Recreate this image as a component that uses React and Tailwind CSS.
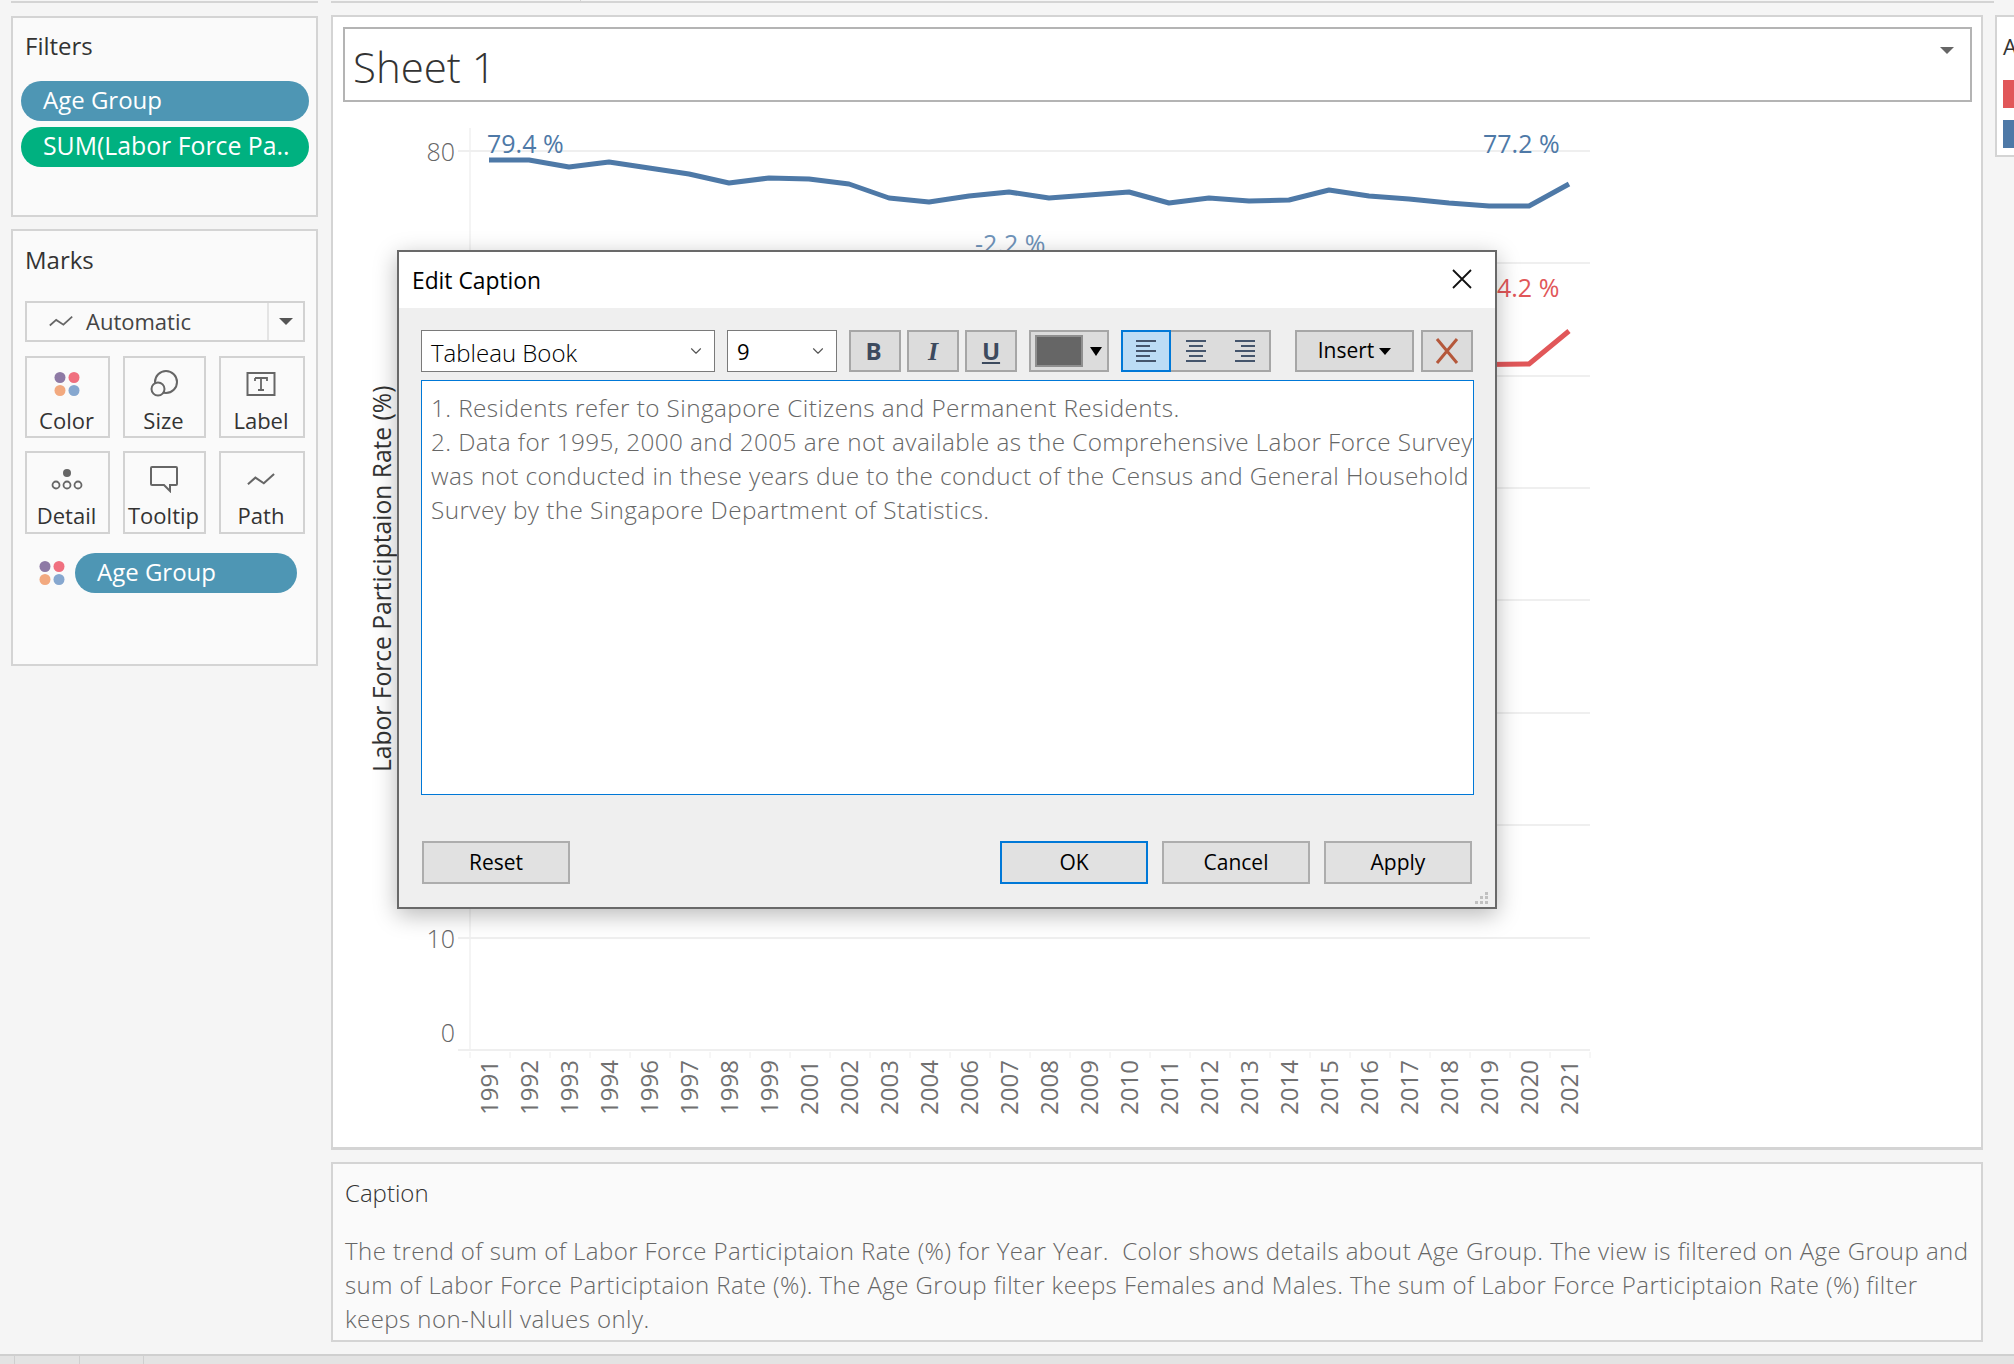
import React from 'react';
import { ChevronDown } from 'lucide-react';

const years = [1991, 1992, 1993, 1994, 1996, 1997, 1998, 1999, 2001, 2002, 2003, 2004, 2006, 2007, 2008, 2009, 2010, 2011, 2012, 2013, 2014, 2015, 2016, 2017, 2018, 2019, 2020, 2021];
const blueY = [160, 160, 167, 162, 168, 174, 183, 178, 179, 184, 198, 202, 196, 192, 198, 195, 192, 203, 198, 201, 200, 190, 196, 199, 203, 206, 206, 184];
const gridLines = [151, 263, 376, 488, 600, 713, 825, 938, 1050];

const book = { fontFamily: '"Open Sans", sans-serif' };

function ColorDots({ className }) {
  return (
    <svg viewBox="0 0 26 26" className={className}>
      <circle cx="6" cy="6.500" r="5.500" fill="#8e7aa5" />
      <circle cx="20" cy="6.500" r="5.500" fill="#f0707f" />
      <circle cx="6" cy="19.500" r="5.500" fill="#f2a97f" />
      <circle cx="20" cy="19.500" r="5.500" fill="#86a7cf" />
    </svg>
  );
}

function SizeIcon() {
  return (
    <svg viewBox="0 0 30 28" className="w-[30px] h-[28px]" fill="none" stroke="#666" strokeWidth="2">
      <circle cx="17" cy="12" r="11" />
      <circle cx="9" cy="19" r="6.500" fill="#fafafa" />
    </svg>
  );
}

function LabelIcon() {
  return (
    <svg viewBox="0 0 30 28" className="w-[30px] h-[28px]" fill="none">
      <rect x="1.500" y="3" width="27" height="22" stroke="#666" strokeWidth="2" />
      <path d="M9 8h12v3M9 8v3M15 8v12M12 20h6" stroke="#666" strokeWidth="1.800" />
    </svg>
  );
}

function DetailIcon() {
  return (
    <svg viewBox="0 0 32 28" className="w-[32px] h-[28px]" fill="none" stroke="#666" strokeWidth="1.800">
      <circle cx="16" cy="8" r="4" fill="#666" stroke="none" />
      <circle cx="5" cy="20" r="3.500" />
      <circle cx="16" cy="20" r="3.500" />
      <circle cx="27" cy="20" r="3.500" />
    </svg>
  );
}

function TooltipIcon() {
  return (
    <svg viewBox="0 0 30 28" className="w-[30px] h-[28px]" fill="none" stroke="#666" strokeWidth="2">
      <path d="M3 2h24a1 1 0 0 1 1 1v16a1 1 0 0 1-1 1h-6v6l-6-6H3a1 1 0 0 1-1-1V3a1 1 0 0 1 1-1z" />
    </svg>
  );
}

function PathIcon({ className }) {
  return (
    <svg viewBox="0 0 30 16" className={className} fill="none" stroke="#666" strokeWidth="2.200">
      <path d="M1 13 L9 6 L18 12 L29 2" />
    </svg>
  );
}

function MarkButton({ icon, label }) {
  return (
    <div className="h-full border-2 border-[#d2d2d2] bg-[#fafafa] flex flex-col items-center pt-[10px] pr-[2px]">
      <div className="h-[32px] flex items-center justify-center">{icon}</div>
      <span className="text-[22px] leading-[30px] text-[#333] mt-[5px] whitespace-nowrap">{label}</span>
    </div>
  );
}

function Pill({ children, className }) {
  return (
    <div className={`h-[40px] rounded-full pl-[22px] pb-[2px] flex items-center text-white whitespace-nowrap ${className}`}>
      {children}
    </div>
  );
}

function ToolButton({ children, className = '' }) {
  return (
    <div className={`h-[42px] border-2 border-[#a6a6a6] bg-[#dcdcdc] flex items-center justify-center ${className}`}>
      {children}
    </div>
  );
}

function AlignLines({ mode }) {
  const short = mode === 'left' ? 'M2 9h14M2 19h14' : mode === 'center' ? 'M5 9h14M5 19h14' : 'M8 9h14M8 19h14';
  return (
    <svg viewBox="0 0 24 28" className="w-[24px] h-[28px]" fill="none" stroke="#45556c" strokeWidth="2.200">
      <path d={`M2 4h20M2 14h20M2 24h20 ${short}`} />
    </svg>
  );
}

function DialogButton({ children, focused }) {
  return (
    <div className={`w-[148px] h-[43px] flex items-center justify-center bg-[#e1e1e1] text-[21px] text-black border-2 ${focused ? 'border-[#0078d7]' : 'border-[#adadad]'}`}>
      {children}
    </div>
  );
}

function Chart() {
  const blue = years.map((_, i) => `${489 + i * 40},${blueY[i]}`).join(' ');
  return (
    <svg viewBox="333 104 1646 1042" className="mt-[2px] w-[1646px] h-[1042px] block" style={book}>
      <line x1="470" y1="128" x2="470" y2="1050" stroke="#f0f0f0" strokeWidth="1.500" />
      {gridLines.map((y) => (
        <line key={y} x1="458" y1={y} x2="1590" y2={y} stroke="#efefef" strokeWidth="2" />
      ))}
      {years.map((year, i) => (
        <g key={year}>
          <line x1={470 + i * 40} y1="1052" x2={470 + i * 40} y2="1058" stroke="#eee" />
          <text transform={`translate(${498 + i * 40} 1115) rotate(-90)`} fontSize="24" fill="#707070">{year}</text>
        </g>
      ))}
      <line x1="1590" y1="1052" x2="1590" y2="1058" stroke="#eee" />
      <text x="455" y="161" textAnchor="end" fontSize="25" fontWeight="300" fill="#666">80</text>
      <text x="455" y="948" textAnchor="end" fontSize="25" fontWeight="300" fill="#666">10</text>
      <text x="455" y="1042" textAnchor="end" fontSize="25" fontWeight="300" fill="#666">0</text>
      <text transform="translate(391 772) rotate(-90)" fontSize="24.600" fill="#333">Labor Force Participtaion Rate (%)</text>
      <polyline points={blue} fill="none" stroke="#4e79a7" strokeWidth="5" strokeLinejoin="round" />
      <polyline points="1449,365 1529,364 1569,331" fill="none" stroke="#e15759" strokeWidth="5" strokeLinejoin="round" />
      <text x="487" y="153" fontSize="25" fill="#4e79a7">79.4 %</text>
      <text x="1483" y="153" fontSize="25" fill="#4e79a7">77.2 %</text>
      <text x="975" y="253" fontSize="25" fill="#6f93b9">-2.2 %</text>
      <text x="1497" y="297" fontSize="25" fill="#e15759">4.2 %</text>
    </svg>
  );
}

function EditCaption() {
  return (
    <div className="absolute left-[397px] top-[250px] w-[1100px] h-[659px] border-2 border-[#696969] bg-[#efefef] shadow-[0_6px_22px_rgba(0,0,0,0.28)] flex flex-col">
      <div className="h-[56px] bg-white flex items-center justify-between pl-[13px] pr-[23px]">
        <span className="text-[22.800px] text-black mt-[2px]">Edit Caption</span>
        <svg viewBox="0 0 20 20" className="w-[20px] h-[20px] -mt-[2px]" stroke="#111" strokeWidth="1.800">
          <path d="M1 1L19 19M19 1L1 19" />
        </svg>
      </div>
      <div className="relative flex-1 pl-[22px] pr-[21px] pt-[22px]">
        <div className="flex items-center text-black">
          <div className="w-[294px] h-[42px] border border-[#7a7a7a] bg-white flex items-center justify-between pl-[9px] pr-[9px]">
            <span className="text-[24px] mt-[4px] font-light" style={book}>Tableau Book</span>
            <ChevronDown className="w-[18px] h-[18px] text-[#555]" strokeWidth={1.500} />
          </div>
          <div className="ml-[12px] w-[110px] h-[42px] border border-[#7a7a7a] bg-white flex items-center justify-between pl-[9px] pr-[9px]">
            <span className="text-[22px]" style={book}>9</span>
            <ChevronDown className="w-[18px] h-[18px] text-[#555]" strokeWidth={1.500} />
          </div>
          <ToolButton className="ml-[12px] w-[52px]">
            <span className="text-[24px] font-bold text-[#3c4a5e] -ml-[3px]">B</span>
          </ToolButton>
          <ToolButton className="ml-[6px] w-[52px]">
            <span className="text-[26px] font-bold italic text-[#3c4a5e]" style={{ fontFamily: '"Liberation Serif", serif' }}>I</span>
          </ToolButton>
          <ToolButton className="ml-[6px] w-[52px]">
            <span className="text-[24px] font-bold underline text-[#3c4a5e]">U</span>
          </ToolButton>
          <ToolButton className="ml-[12px] w-[80px] justify-start pl-[4px] gap-[7px]">
            <div className="w-[48px] h-[32px] bg-[#666] border-2 border-[#8f8f8f]" />
            <div className="w-0 h-0 border-x-[6px] border-x-transparent border-t-[9px] border-t-black" />
          </ToolButton>
          <div className="ml-[12px] flex h-[42px] w-[150px]">
            <ToolButton className="w-[50px] !border-[#0078d7] !bg-[#bcdcf5]"><AlignLines mode="left" /></ToolButton>
            <ToolButton className="w-[50px] border-x-0"><AlignLines mode="center" /></ToolButton>
            <ToolButton className="w-[50px] border-l-0"><AlignLines mode="right" /></ToolButton>
          </div>
          <ToolButton className="ml-[24px] w-[119px] gap-[5px]">
            <span className="text-[21px]">Insert</span>
            <div className="w-0 h-0 border-x-[6px] border-x-transparent border-t-[7px] border-t-black" />
          </ToolButton>
          <ToolButton className="ml-[7px] w-[52px]">
            <svg viewBox="0 0 26 28" className="w-[26px] h-[28px]" fill="none" stroke="#b5583b" strokeWidth="3">
              <path d="M3 2 L23 26 M23 2 L3 26" />
            </svg>
          </ToolButton>
        </div>
        <div className="mt-[8px] h-[415px] border border-[#0078d7] bg-white pl-[9px] pr-0 pt-[10px] text-[24.300px] leading-[34px] tracking-[0.420px] text-[#666] font-light" style={book}>
          <div>1. Residents refer to Singapore Citizens and Permanent Residents.</div>
          <div>2. Data for 1995, 2000 and 2005 are not available as the Comprehensive Labor Force Survey was not conducted in these years due to the conduct of the Census and General Household Survey by the Singapore Department of Statistics.</div>
        </div>
        <div className="mt-[46px] pl-[1px] flex justify-between">
          <DialogButton>Reset</DialogButton>
          <div className="flex gap-[14px] pr-[2px]">
            <DialogButton focused>OK</DialogButton>
            <DialogButton>Cancel</DialogButton>
            <DialogButton>Apply</DialogButton>
          </div>
        </div>
        <svg viewBox="0 0 14 14" className="absolute right-[6px] bottom-[2px] w-[14px] h-[14px]" fill="#c0c0c0">
          <rect x="10" y="1" width="3" height="3" />
          <rect x="5" y="5" width="3" height="3" />
          <rect x="10" y="5" width="3" height="3" />
          <rect x="0" y="10" width="3" height="3" />
          <rect x="5" y="10" width="3" height="3" />
          <rect x="10" y="10" width="3" height="3" />
        </svg>
      </div>
    </div>
  );
}

export default function App() {
  return (
    <div className="relative w-[2014px] h-[1364px] overflow-hidden bg-[#f5f5f5] flex flex-col" style={{ fontFamily: '"Open Sans", sans-serif' }}>
      {/* clipped cards from the row above */}
      <div className="h-[3px] flex">
        <div className="ml-[11px] w-[307px] border-b-2 border-[#d4d4d4]" />
        <div className="ml-[13px] w-[249px] border-b-2 border-[#d4d4d4]" />
        <div className="w-[1414px] border-b-2 border-l border-[#d4d4d4]" />
      </div>

      <div className="flex-1 flex">
        {/* left shelf */}
        <div className="w-[331px] shrink-0 pl-[11px] pr-[13px] pt-[13px] flex flex-col gap-[12px]">
          <div className="h-[201px] border-2 border-[#d4d4d4] bg-[#fafafa] pl-[8px] pr-[7px] pt-[12px]">
            <div className="pl-[4px] text-[24px] leading-[32px] text-[#333]">Filters</div>
            <div className="mt-[19px] flex flex-col gap-[6px]">
              <Pill className="bg-[#4e96b4] text-[24px]">Age Group</Pill>
              <Pill className="bg-[#00b180] text-[24.800px]">SUM(Labor Force Pa..</Pill>
            </div>
          </div>
          <div className="h-[437px] border-2 border-[#d4d4d4] bg-[#fafafa] px-[12px] pt-[13px]">
            <div className="text-[24px] leading-[32px] text-[#333]">Marks</div>
            <div className="mt-[25px] h-[41px] w-[280px] border-2 border-[#d2d2d2] flex items-center">
              <div className="flex-1 flex items-center pl-[22px] gap-[13px]">
                <PathIcon className="w-[24px] h-[13px]" />
                <span className="text-[22px] text-[#444]">Automatic</span>
              </div>
              <div className="w-[36px] h-full border-l-2 border-[#e4e4e4] flex items-center justify-center">
                <div className="w-0 h-0 border-x-[7px] border-x-transparent border-t-[7px] border-t-[#555]" />
              </div>
            </div>
            <div className="mt-[14px] w-[280px] grid grid-cols-[85px_83px_86px] grid-rows-[82px_83px] gap-x-[13px] gap-y-[13px]">
              <MarkButton icon={<ColorDots className="w-[26px] h-[26px]" />} label="Color" />
              <MarkButton icon={<SizeIcon />} label="Size" />
              <MarkButton icon={<LabelIcon />} label="Label" />
              <MarkButton icon={<DetailIcon />} label="Detail" />
              <MarkButton icon={<TooltipIcon />} label="Tooltip" />
              <MarkButton icon={<PathIcon className="w-[28px] h-[15px]" />} label="Path" />
            </div>
            <div className="mt-[19px] flex items-center pl-[14px] gap-[10px]">
              <ColorDots className="w-[26px] h-[26px]" />
              <Pill className="w-[222px] bg-[#4e96b4] text-[24px]">Age Group</Pill>
            </div>
          </div>
        </div>

        {/* main view */}
        <div className="w-[1652px] shrink-0 pt-[12px] flex flex-col gap-[12px]">
          <div className="h-[1135px] border-2 border-[#d4d4d4] border-b-[3px] bg-white">
            <div className="pt-[10px] pl-[10px] pr-[9px]">
              <div className="h-[75px] border-2 border-[#b4b4b4] relative flex items-center pl-[8px]">
                <span className="text-[42px] text-[#333] mt-[4px] font-light">Sheet 1</span>
                <div className="absolute right-[16px] top-[18px] w-0 h-0 border-x-[7px] border-x-transparent border-t-[7px] border-t-[#666]" />
              </div>
            </div>
            <Chart />
          </div>
          <div className="h-[180px] border-2 border-[#d4d4d4] bg-[#fafafa] pl-[12px] pr-[8px] pt-[12px] font-light">
            <div className="text-[24px] leading-[34px] text-[#333]">Caption</div>
            <div className="mt-[24px] text-[24px] leading-[34px] tracking-[0.440px] text-[#666]">
              The trend of sum of Labor Force Participtaion Rate (%) for Year Year.&nbsp; Color shows details about Age Group. The view is filtered on Age Group and sum of Labor Force Participtaion Rate (%). The Age Group filter keeps Females and Males. The sum of Labor Force Participtaion Rate (%) filter keeps non-Null values only.
            </div>
          </div>
        </div>

        {/* legend, cut off by the window */}
        <div className="ml-[12px] w-[19px] shrink-0 pt-[12px]">
          <div className="h-[142px] border-2 border-r-0 border-[#d4d4d4] bg-white pl-[6px] pt-[14px]">
            <div className="text-[22px] leading-[30px] text-[#333]">A</div>
            <div className="mt-[19px] h-[28px] bg-[#e15759]" />
            <div className="mt-[12px] h-[28px] bg-[#4e79a7]" />
          </div>
        </div>
      </div>

      {/* status bar */}
      <div className="h-[10px] border-t-2 border-[#cfcfcf] bg-[#e3e3e3] flex">
        <div className="w-[15px] border-r border-[#cfcfcf]" />
        <div className="w-[65px] border-r border-[#cfcfcf]" />
        <div className="w-[64px] border-r border-[#cfcfcf]" />
      </div>

      <EditCaption />
    </div>
  );
}
